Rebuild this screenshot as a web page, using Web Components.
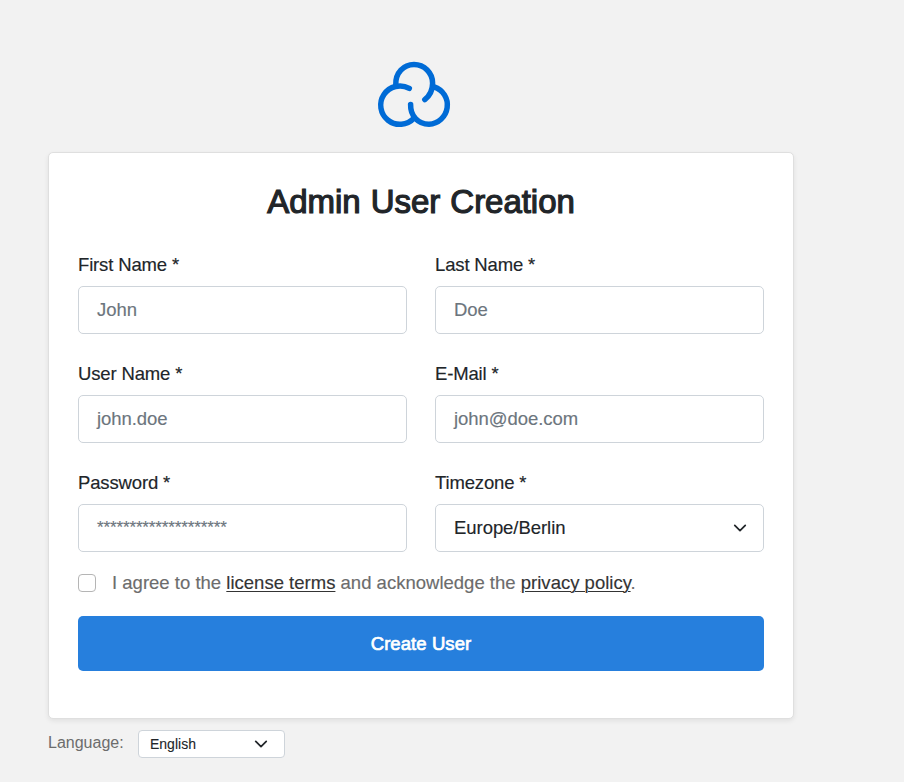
<!DOCTYPE html>
<html lang="en"><head><meta charset="utf-8"><title>Admin User Creation</title>
<style>
html,body{margin:0;background:#f2f2f2}
body{width:904px;height:782px;overflow:hidden;font-family:"Liberation Sans",Arial,sans-serif;color:#212529}
</style></head><body>
<setup-page>
  <cloud-logo slot="logo"></cloud-logo>
  <form-card heading="Admin User Creation">
    <form-field label="First Name *">John</form-field>
    <form-field label="Last Name *">Doe</form-field>
    <form-field label="User Name *">john.doe</form-field>
    <form-field label="E-Mail *">john@doe.com</form-field>
    <form-field label="Password *" class="secret">********************</form-field>
    <form-field label="Timezone *" type="select">Europe/Berlin</form-field>
    <consent-row slot="footer">I agree to the <a>license terms</a> and acknowledge the <a>privacy policy</a>.</consent-row>
    <submit-button slot="footer">Create User</submit-button>
  </form-card>
  <language-picker slot="bottom" label="Language:">English</language-picker>
</setup-page>
<script>
function define(name, html) {
  customElements.define(name, class extends HTMLElement {
    constructor() {
      super();
      const t = document.createElement('template');
      t.innerHTML = html;
      this.attachShadow({mode: 'open'}).append(t.content.cloneNode(true));
    }
    connectedCallback() {
      const l = this.shadowRoot.querySelector('[data-label]');
      if (l) l.textContent = this.getAttribute('label') || this.getAttribute('heading');
    }
  });
}
define('chevron-icon', `<style>:host{display:block;width:14px;height:14px}svg{display:block;width:100%;height:100%}</style>
<svg viewBox="0 0 16 16" fill="none" stroke="#212529" stroke-width="2" stroke-linecap="round" stroke-linejoin="round"><path d="m2 5 6 6 6-6"/></svg>`);
define('cloud-logo', `<style>:host{display:block;width:100px;height:90px}svg{display:block}</style>
<svg width="100" height="90" viewBox="0 0 100 90" fill="none" stroke="#006bd6" stroke-width="5.5" stroke-linecap="round">
<path d="M31.8 34.5C31.5 23 39.5 14.6 50 14.6A18.6 18.6 0 0 1 68.6 33.2C68.6 40 65.5 45.8 60.8 49.6"/>
<path d="M45.3 38.4A19.2 19.2 0 1 0 50 68.2"/>
<path d="M46.6 54.4C46.3 66 54 74.2 65 74.2A19.2 19.2 0 0 0 70.2 36.8"/></svg>`);
define('setup-page', `<style>:host{display:flex;flex-direction:column;box-sizing:border-box;width:904px;height:782px;padding:50px 110px 0 48px}
.logo{display:flex;justify-content:center;height:101px;padding-right:14px}</style>
<div class="logo"><slot name="logo"></slot></div><slot></slot><slot name="bottom"></slot>`);
define('form-card', `<style>:host{display:block;box-sizing:border-box;width:746px;height:567px;margin-top:1px;padding:28px 29px 0;background:#fff;border:1px solid #dfdfdf;border-radius:5px;box-shadow:0 2px 5px rgba(0,0,0,.075)}
h1{margin:0 0 29px;font:400 33px/42px "Liberation Sans",Arial,sans-serif;text-align:center;-webkit-text-stroke:1.2px #212529;letter-spacing:-.04px;word-spacing:1px}
.grid{display:grid;grid-template-columns:1fr 1fr;column-gap:28px;row-gap:27px}</style>
<h1 data-label></h1><div class="grid"><slot></slot></div><slot name="footer"></slot>`);
define('form-field', `<style>:host{display:block;font-size:18.5px;height:82px}
label{display:block;height:34px;line-height:26px;letter-spacing:-.15px;-webkit-text-stroke:.15px #212529}
.box{box-sizing:border-box;height:48px;display:flex;align-items:center;justify-content:space-between;padding:0 16px 0 18px;border:1px solid #ced4da;border-radius:5px;color:#6c757d;letter-spacing:-.05px;-webkit-text-stroke:.15px}
:host(.secret) .box{font-size:17px;letter-spacing:-.135px}
chevron-icon{display:none}
:host([type=select]) .box{color:#212529}:host([type=select]) chevron-icon{display:block}</style>
<label data-label></label><div class="box"><span><slot></slot></span><chevron-icon></chevron-icon></div>`);
define('consent-row', `<style>:host{display:flex;align-items:center;height:24px;margin-top:19px;font-size:18.5px;color:#6c6c6c}
i{box-sizing:border-box;flex:none;width:18px;height:18px;border:1px solid #b5b5b5;border-radius:4px;margin-right:16px}
span{white-space:pre;letter-spacing:.01px;-webkit-text-stroke:.15px}::slotted(a){color:#343434;text-decoration:underline;text-decoration-thickness:1px;text-underline-offset:2px}</style>
<i></i><span><slot></slot></span>`);
define('submit-button', `<style>:host{display:flex;align-items:center;justify-content:center;box-sizing:border-box;height:55px;margin-top:21px;padding-top:1px;border-radius:5px;background:#267fdd;color:#fff;font-size:18.5px;letter-spacing:.08px;-webkit-text-stroke:.7px #fff}</style><span><slot></slot></span>`);
define('language-picker', `<style>:host{display:flex;margin-top:11px;height:28px}
label{width:90px;font-size:16px;line-height:25px;color:#6c6c6c}
.box{box-sizing:border-box;width:147px;height:28px;display:flex;align-items:center;justify-content:space-between;padding:0 16px 0 11px;background:#fff;border:1px solid #ced4da;border-radius:4px;font-size:14px;-webkit-text-stroke:.1px}</style>
<label data-label></label><div class="box"><span><slot></slot></span><chevron-icon></chevron-icon></div>`);
</script></body></html>
